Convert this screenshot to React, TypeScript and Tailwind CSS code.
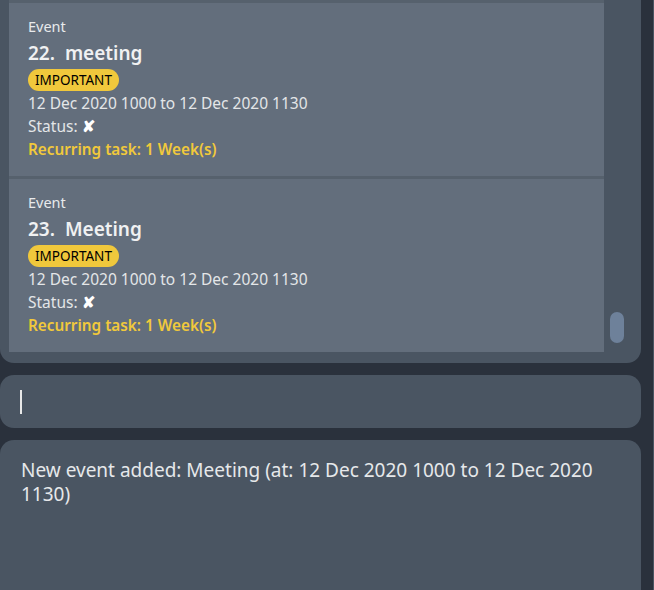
import React from "react";

type Item = { idx: number; name: string };

const items: Item[] = [
  { idx: 22, name: "meeting" },
  { idx: 23, name: "Meeting" },
];

function Card({ item }: { item: Item }) {
  return (
    <div className="h-[176px] border-t-[3px] border-[#56616d] bg-[#636e7c] pl-[19px] pt-[13px] flex flex-col">
      <div className="text-[14.5px] leading-[20px] text-[#e8eaec]">Event</div>
      <div className="mt-[4px] text-[19px] leading-[26px] font-semibold text-[#f0f1f2] whitespace-pre">
        {item.idx}.  {item.name}
      </div>
      <div className="mt-[3px] flex">
        <span className="h-[22px] px-[7px] rounded-full bg-[#f0c83c] text-black text-[13.5px] leading-[22px]">
          IMPORTANT
        </span>
      </div>
      <div className="mt-[1px] text-[15.5px] leading-[23px] text-[#e4e6e8]">
        12 Dec 2020 1000 to 12 Dec 2020 1130
      </div>
      <div className="text-[15.5px] leading-[23px] text-[#e4e6e8]">
        Status: <span className="text-white font-bold">✘</span>
      </div>
      <div className="text-[15.3px] leading-[23px] font-semibold text-[#f1c93b]">
        Recurring task: 1 Week(s)
      </div>
    </div>
  );
}

export default function App() {
  return (
    <div
      className="w-[654px] h-[590px] overflow-hidden bg-[#2a313c] border-r border-[#4a5562] pr-[12px] flex flex-col"
      style={{ fontFamily: '"Noto Sans", "Open Sans", sans-serif' }}
    >
      <div className="h-[363px] shrink-0 bg-[#4a5562] rounded-b-[14px] flex pl-[9px]">
        <div className="w-[595px] flex flex-col">
          {items.map((it) => (
            <Card key={it.idx} item={it} />
          ))}
        </div>
        <div className="flex-1 flex flex-col justify-end pb-[20px] pl-[6px]">
          <div className="w-[14px] h-[31px] rounded-full bg-[#6e819a]" />
        </div>
      </div>
      <div className="mt-[12px] h-[53px] shrink-0 bg-[#4a5562] rounded-[14px] flex items-center pl-[20px]">
        <div className="w-[2px] h-[24px] bg-[#e8e8e8]" />
      </div>
      <div className="mt-[12px] flex-1 bg-[#4a5562] rounded-t-[14px] pl-[21px] pr-[20px] pt-[18px]">
        <div className="text-[19px] leading-[24px] text-[#e6e8ea]">
          New event added: Meeting (at: 12 Dec 2020 1000 to 12 Dec 2020 1130)
        </div>
      </div>
    </div>
  );
}
